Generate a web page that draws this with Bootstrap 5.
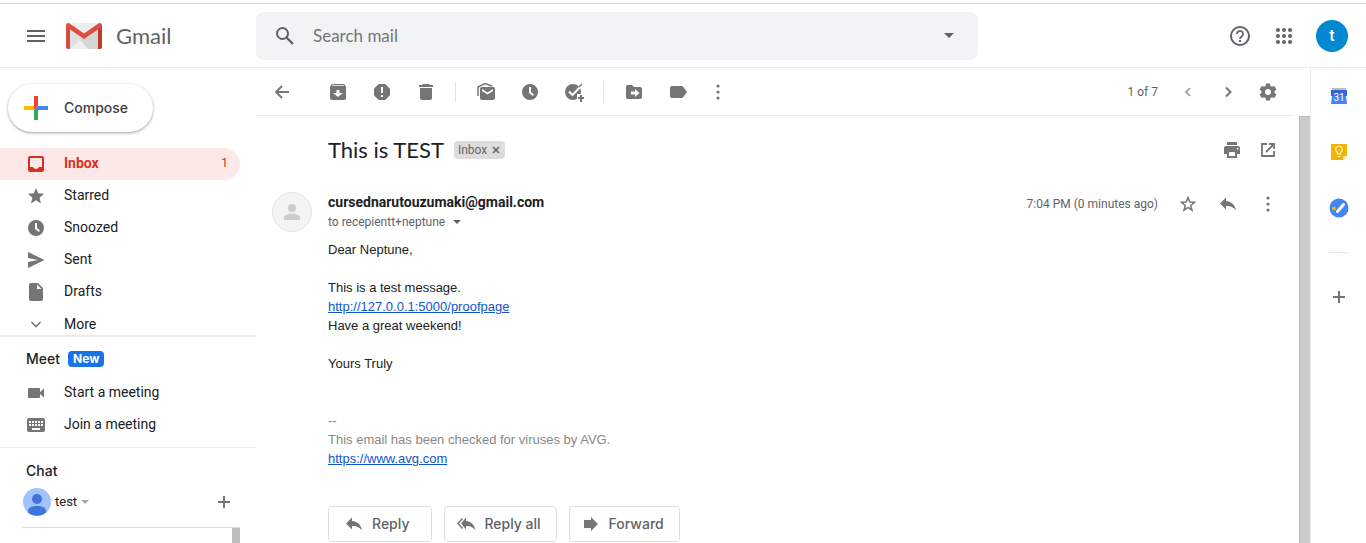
<!DOCTYPE html>
<html lang="en">
<head>
<meta charset="utf-8">
<meta name="viewport" content="width=device-width, initial-scale=1">
<title>This is TEST - Gmail</title>
<link href="https://cdn.jsdelivr.net/npm/bootstrap@5.3.0/dist/css/bootstrap.min.css" rel="stylesheet">
<style>
:root { --ink: #202124; --muted: #5f6368; --icon: #757575; --line: #ececec; --brand-font: Inter, "Open Sans", sans-serif; }
body { font: 14px/20px Roboto, Arial, sans-serif; color: var(--ink); background: #fff; }
svg { display: block; fill: currentColor; flex: none; }
button { border: 0; background: none; padding: 0; color: inherit; }
a { color: inherit; text-decoration: none; }
.ico { width: 20px; height: 20px; }
.icon-btn { display: flex; align-items: center; justify-content: center; flex: none; width: 40px; height: 40px; color: var(--icon); border-radius: 50%; }
.icon-btn.wide { width: 44px; }
.icon-btn.slim { width: 36px; }
.icon-btn.short { height: 24px; }
.icon-btn.print { width: 32px; }

.topbar { border-top: 1px solid #dadce0; border-bottom: 1px solid var(--line); padding: 8px 18px 7px 0; margin-top: 3px; color: var(--muted); }
.logo-area { width: 256px; padding-left: 16px; gap: 10px; }
.logo-text { font: 22px/28px Lato, sans-serif; color: var(--muted); margin-left: 14px; }
.search { background: #f1f3f4; border-radius: 8px; height: 48px; max-width: 722px; padding: 0 9px; }
.search input { border: 0; outline: 0; background: none; font: 17px/24px Lato, sans-serif; color: var(--ink); padding: 0; min-width: 0; }
.search input::placeholder { color: #757575; opacity: 1; }
.account { width: 32px; height: 32px; border-radius: 50%; background: #0288d1; color: #fff; font-size: 16px; font-weight: 500; margin-left: 10px; }

.side { width: 256px; }
.compose { margin: 16px 8px; height: 48px; padding: 0 25px 0 12px; border-radius: 24px; font: 500 14px/20px var(--brand-font); color: #3c4043; box-shadow: 0 1px 2px rgba(60,64,67,.3), 0 1px 3px 1px rgba(60,64,67,.15); }
.folders { height: 187px; overflow: hidden; }
.side-row { display: flex; align-items: center; height: 32px; width: 240px; padding: 0 12px 2px 26px; border-radius: 0 16px 16px 0; }
.side-row svg { color: var(--icon); margin: 2px 18px 0 0; }
.side-row.more { padding-bottom: 0; }
.side-row.current { background: #fce8e6; color: #d93025; font-weight: 700; }
.side-row.current svg { color: #d93025; }
.side-block { border-top: 1px solid var(--line); }
.meet-block { border-top: 2px solid #e8eaed; padding-bottom: 6px; }
.chat-block { padding-top: 13px; }
.side-title { font: 500 14px/20px var(--brand-font); padding-left: 26px; margin: 0; }
.new-tag { background: #1a73e8; color: #fff; font: 700 12px/16px var(--brand-font); border-radius: 4px; padding: 0 5px; }
.chat-user { padding: 7px 12px 11px 23px; font-size: 13px; }
.chat-list { margin-left: 23px; width: 217px; border-top: 1px solid #dadce0; min-height: 40px; }
.chat-list span { width: 8px; background: #bdbdbd; }

.toolbar { height: 48px; padding: 4px 6px 0 4px; margin-right: 16px; border-bottom: 1px solid var(--line); }
.rule { width: 1px; height: 20px; margin: 10px 8px 0 7px; background: #e4e4e4; }
.count { font-size: 12px; color: var(--muted); }
.toolbar .count, .stamp { margin-right: 10px; }
.toolbar .count { line-height: 40px; }
.mail { padding: 18px 11px 0 16px; }
.subject { font: 22px/28px Lato, Roboto, sans-serif; margin: 0; }
.label-chip { background: #ddd; color: #666; font-size: 12px; line-height: 18px; border-radius: 4px; padding: 0 4px; margin: 0 10px; }
.mail-head { margin-top: 26px; }
.sender { font-size: 14px; font-weight: 700; line-height: 20px; }
.to { font-size: 12px; line-height: 20px; color: var(--muted); }
.person { width: 40px; height: 40px; border-radius: 50%; background: #f4f4f4; border: 1px solid #e3e3e3; color: #ccc; }
.letter { font: 13px/19px "Liberation Sans", Arial, sans-serif; color: #222; margin: 0 0 38px; padding: 8px 0 0 56px; }
.letter p { margin: 0 0 19px; }
.letter a { color: #15c; text-decoration: underline; }
.footer-note { color: #888; margin-top: 38px; }
.answer { height: 36px; border: 1px solid #dadce0; border-radius: 4px; color: var(--muted); font: 500 14px/20px var(--brand-font); padding: 0 15px 0 11px; gap: 8px; }
.answer.first { padding: 0 22px 0 15px; }
.answer svg { color: var(--icon); }
.track { width: 11px; background: #ccc; border-left: 1px solid #b8b8b8; border-top: 1px solid #b8b8b8; }
.addons { width: 56px; border-left: 1px solid var(--line); }
.addons hr { width: 20px; margin: 16px 0; border-top: 1px solid #999; }
.addons .icon-btn { width: 56px; height: 56px; }
</style>
</head>
<body class="vh-100 overflow-hidden d-flex flex-column">
<svg width="0" height="0" class="position-absolute" aria-hidden="true">
  <symbol id="clock" viewBox="0 0 20 20"><path fill-rule="evenodd" d="M10 2a8 8 0 1 0 0 16 8 8 0 0 0 0-16zM9 5h2v5l3 2.400-1 1.600-4-3z"/></symbol>
  <symbol id="dots" viewBox="0 0 20 20"><circle cx="10" cy="4" r="1.600"/><circle cx="10" cy="10" r="1.600"/><circle cx="10" cy="16" r="1.600"/></symbol>
  <symbol id="reply" viewBox="0 0 20 20"><path d="M8 7V3.500L2 9.500l6 6V12c4.500-.300 7.500 1.200 10 4.500-.800-5-4-9-10-9.500z"/></symbol>
  <symbol id="plus" viewBox="0 0 20 20"><path d="M9 4h2v5h5v2h-5v5H9v-5H4V9h5z"/></symbol>
  <symbol id="caret" viewBox="0 0 10 6"><path d="M0 0h10L5 5z"/></symbol>
  <symbol id="person" viewBox="0 0 20 20"><circle cx="10" cy="6" r="4"/><path d="M2 18v-2.500c0-2.500 5-4 8-4s8 1.500 8 4V18z"/></symbol>
</svg>

<header class="topbar d-flex align-items-center flex-shrink-0">
  <div class="logo-area d-flex align-items-center flex-shrink-0">
    <button class="icon-btn text-reset" aria-label="Main menu"><svg class="ico" viewBox="0 0 20 20"><path d="M1 4h18v2H1zM1 9h18v2H1zM1 14h18v2H1z"/></svg></button>
    <a href="#" class="d-flex align-items-center" aria-label="Gmail">
      <svg width="36" height="26" viewBox="0 0 36 26"><path fill="#e0e0e0" d="M3 0h30v26H3z"/><path fill="#eee" d="M4 0h28L18 11z"/><path fill="#d0d0d0" d="M32 5v21H20l-6-9 4-2z" opacity=".7"/><path fill="#f0f0f0" d="m4 26 10-9 8 9z"/><path fill="#d54b3d" d="M0 2v22a2 2 0 0 0 2 2h2V4z"/><path fill="#c13a2c" d="M36 2v22a2 2 0 0 1-2 2h-2V4z"/><path fill="#de4e40" d="M3.500.400 18 10.500 32.500.400c1.700-1 3.500.200 3.500 2 0 1-.500 1.600-1.200 2.200L18 16 1.200 4.600C.5 4 0 3.400 0 2.400c0-1.800 1.800-3 3.500-2z"/></svg>
      <span class="logo-text">Gmail</span>
    </a>
  </div>
  <form class="search d-flex align-items-center flex-grow-1" role="search">
    <button type="button" class="icon-btn text-reset" aria-label="Search"><svg width="20" height="20" viewBox="0 0 20 20"><circle cx="7.500" cy="7.500" r="5.500" fill="none" stroke="currentColor" stroke-width="2"/><path d="m11.500 11.500 6.500 6.500" stroke="currentColor" stroke-width="2.400"/></svg></button>
    <input class="flex-grow-1 ms-2" type="text" placeholder="Search mail" aria-label="Search mail">
    <button type="button" class="icon-btn text-reset" aria-label="Search options"><svg width="10" height="6"><use href="#caret"/></svg></button>
  </form>
  <div class="d-flex align-items-center ms-auto">
    <button class="icon-btn wide text-reset" aria-label="Support"><svg width="22" height="22" viewBox="0 0 22 22"><circle cx="11" cy="11" r="9" fill="none" stroke="currentColor" stroke-width="2"/><path d="M8 9a3 3 0 1 1 4.600 2.500C11.500 12.200 11 12.700 11 14" fill="none" stroke="currentColor" stroke-width="1.800"/><path d="M10 15h2v2h-2z"/></svg></button>
    <button class="icon-btn wide text-reset" aria-label="Google apps"><svg class="ico" viewBox="0 0 20 20"><g id="trio"><circle cx="4" cy="4" r="2"/><circle cx="10" cy="4" r="2"/><circle cx="16" cy="4" r="2"/></g><use href="#trio" y="6"/><use href="#trio" y="12"/></svg></button>
    <button class="account" aria-label="Account">t</button>
  </div>
</header>

<div class="d-flex flex-grow-1 overflow-hidden">
  <aside class="side flex-shrink-0 overflow-hidden">
    <button class="compose d-flex align-items-center"><svg width="32" height="32" viewBox="0 0 32 32"><path fill="#ea4335" d="M14 4h4v10l-2 2-2 2z"/><path fill="#fbbc04" d="M4 14h10v4H4z"/><path fill="#34a853" d="M14 18h4v10h-4z"/><path fill="#4285f4" d="M18 14h10v4H14z"/></svg><span class="ms-2 ps-1">Compose</span></button>
    <nav class="folders">
      <a href="#" class="side-row current"><svg class="ico" viewBox="0 0 20 20"><path fill-rule="evenodd" d="M4 2h12a2 2 0 0 1 2 2v12a2 2 0 0 1-2 2H4a2 2 0 0 1-2-2V4a2 2 0 0 1 2-2zm0 2v9h3c.500 1.300 1.600 2 3 2s2.500-.700 3-2h3V4z"/></svg>Inbox<span class="ms-auto fw-normal count text-reset">1</span></a>
      <a href="#" class="side-row"><svg class="ico" viewBox="0 0 20 20"><path d="m10 14.200-5 3.300 1.400-5.800L2 7.800l5.800-.5L10 2l2.200 5.300 5.800.5-4.400 3.900 1.300 5.800z"/></svg>Starred</a>
      <a href="#" class="side-row"><svg class="ico"><use href="#clock"/></svg>Snoozed</a>
      <a href="#" class="side-row"><svg class="ico" viewBox="0 0 20 20"><path d="M2 2v6l10 2-10 2v6l16.500-8z"/></svg>Sent</a>
      <a href="#" class="side-row"><svg class="ico" viewBox="0 0 20 20"><path fill-rule="evenodd" d="M5 1h7l5 5v11a2 2 0 0 1-2 2H5a2 2 0 0 1-2-2V3a2 2 0 0 1 2-2zm6 1.500V7h4.500z"/></svg>Drafts</a>
      <a href="#" class="side-row more"><svg class="ico" viewBox="0 0 20 20"><path d="m5.500 7 4.500 4.500L14.500 7" fill="none" stroke="currentColor" stroke-width="1.600"/></svg>More</a>
    </nav>
    <section class="side-block meet-block">
      <div class="d-flex align-items-center gap-2 pt-2 mt-1 pb-2"><h2 class="side-title">Meet</h2><span class="new-tag">New</span></div>
      <a href="#" class="side-row"><svg class="ico" viewBox="0 0 20 20"><path d="M3 5h10a1 1 0 0 1 1 1v3l4-3.500v9L14 11v3a1 1 0 0 1-1 1H3a1 1 0 0 1-1-1V6a1 1 0 0 1 1-1z"/></svg>Start a meeting</a>
      <a href="#" class="side-row"><svg class="ico" viewBox="0 0 20 20"><rect x="1" y="3" width="18" height="14" rx="2"/><path d="M3 7h14M3 10h14" stroke="#fff" stroke-width="2" stroke-dasharray="2 1"/><path d="M6 14h8" stroke="#fff" stroke-width="2"/></svg>Join a meeting</a>
    </section>
    <section class="side-block chat-block">
      <h2 class="side-title">Chat</h2>
      <div class="chat-user d-flex align-items-center">
        <svg width="28" height="28" viewBox="0 0 28 28"><circle cx="14" cy="14" r="14" fill="#a1c2fa"/><g fill="#3f74e0"><circle cx="14" cy="11" r="5"/><path d="M5 24.500v-1.500c0-3.300 4-5 9-5s9 1.700 9 5v1.500a14 14 0 0 1-18 0z"/></g></svg>
        <span class="mx-1">test</span><svg width="8" height="5" color="#aaa"><use href="#caret"/></svg>
        <button class="icon-btn short ms-auto" aria-label="Start a chat"><svg class="ico"><use href="#plus"/></svg></button>
      </div>
      <div class="chat-list d-flex justify-content-end"><span></span></div>
    </section>
  </aside>

  <main class="flex-grow-1 d-flex flex-column overflow-hidden">
    <div class="toolbar d-flex align-items-start flex-shrink-0">
      <button class="icon-btn wide me-2" aria-label="Back"><svg class="ico" viewBox="0 0 20 20"><path d="M17 10H4.500M10 4l-6 6 6 6" fill="none" stroke="currentColor" stroke-width="1.900"/></svg></button>
      <button class="icon-btn wide ms-1" aria-label="Archive"><svg class="ico" viewBox="0 0 20 20"><path fill-rule="evenodd" d="M4 2h12l2 2.500V16a2 2 0 0 1-2 2H4a2 2 0 0 1-2-2V4.500zm0 1.200V4h12v-.800zM8.500 8v3H5l5 4 5-4h-3.500V8z"/></svg></button>
      <button class="icon-btn wide" aria-label="Report spam"><svg class="ico" viewBox="0 0 20 20"><path fill-rule="evenodd" d="M6.700 2h6.600L18 6.700v6.600L13.300 18H6.700L2 13.300V6.700zM9 5v6h2V5zm0 8v2h2v-2z"/></svg></button>
      <button class="icon-btn wide" aria-label="Delete"><svg class="ico" viewBox="0 0 20 20"><path d="M7 2h6l1 1h3v2H3V3h3zM4 6h12v10a2 2 0 0 1-2 2H6a2 2 0 0 1-2-2z"/></svg></button>
      <span class="rule"></span>
      <button class="icon-btn wide" aria-label="Mark as unread"><svg class="ico" viewBox="0 0 20 20"><path fill-rule="evenodd" d="M6 5h11a2 2 0 0 1 2 2v9a2 2 0 0 1-2 2H6a2 2 0 0 1-2-2V7a2 2 0 0 1 2-2zm0 2v2l5.500 3.500L17 9V7l-5.500 3.500z"/><path d="M2 14V5l7-3.500L16 4" fill="none" stroke="currentColor" stroke-width="1.500"/></svg></button>
      <button class="icon-btn wide" aria-label="Snooze"><svg class="ico"><use href="#clock"/></svg></button>
      <button class="icon-btn wide" aria-label="Add to tasks"><svg class="ico" viewBox="0 0 20 20"><circle cx="9" cy="10" r="8"/><path d="m5 9.500 3.500 3.500L18 3" fill="none" stroke="#fff" stroke-width="2"/><path d="m15 5 3-3" stroke="currentColor" stroke-width="1.500"/><path d="M13 12h7v8h-7z" fill="#fff"/><path d="M16 13h2v2h2v2h-2v3h-2v-3h-2v-2h2z"/></svg></button>
      <span class="rule"></span>
      <button class="icon-btn wide" aria-label="Move to"><svg class="ico" viewBox="0 0 20 20"><path fill-rule="evenodd" d="M4 3h4l2 2h6a2 2 0 0 1 2 2v8a2 2 0 0 1-2 2H4a2 2 0 0 1-2-2V5a2 2 0 0 1 2-2zm7 4v2.500H7v3h4V15l4.500-4z"/></svg></button>
      <button class="icon-btn wide" aria-label="Labels"><svg class="ico" viewBox="0 0 20 20"><path d="M4 4h9.500c.8 0 1.400.400 1.800 1L19 10l-3.700 5c-.4.600-1 1-1.800 1H4a2 2 0 0 1-2-2V6a2 2 0 0 1 2-2z"/></svg></button>
      <button class="icon-btn slim" aria-label="More"><svg class="ico"><use href="#dots"/></svg></button>
      <span class="count ms-auto">1 of 7</span>
      <button class="icon-btn opacity-75" aria-label="Newer"><svg class="ico" viewBox="0 0 20 20"><path d="m12 6-4 4 4 4" fill="none" stroke="currentColor" stroke-width="1.600"/></svg></button>
      <button class="icon-btn" aria-label="Older"><svg class="ico" viewBox="0 0 20 20"><path d="m8 5.500 4.500 4.500L8 14.500" fill="none" stroke="currentColor" stroke-width="2"/></svg></button>
      <button class="icon-btn" aria-label="Settings"><svg class="ico" viewBox="0 0 20 20"><path fill-rule="evenodd" d="M8 1.500h4l.5 2.400 1.600.9 2.300-.8 2 3.500-1.800 1.600v1.800l1.800 1.600-2 3.500-2.300-.8-1.600.9-.5 2.400H8l-.5-2.400-1.600-.9-2.300.8-2-3.500 1.800-1.600V9.100L1.600 7.500l2-3.500 2.300.8 1.600-.9zM10 7a3 3 0 1 0 0 6 3 3 0 0 0 0-6z"/></svg></button>
    </div>
    <div class="d-flex flex-grow-1 overflow-hidden">
      <article class="mail flex-grow-1">
        <div class="d-flex align-items-center ps-5">
          <h1 class="subject ms-2">This is TEST</h1>
          <span class="label-chip d-flex align-items-center">Inbox<button class="ms-1 d-flex" aria-label="Remove label"><svg width="10" height="10" viewBox="0 0 10 10"><path d="m2 2 6 6M8 2 2 8" stroke="currentColor" stroke-width="1.600"/></svg></button></span>
          <button class="icon-btn short print ms-auto my-1" aria-label="Print"><svg class="ico" viewBox="0 0 20 20"><path fill-rule="evenodd" d="M5 2h10v3H5zM4 6h12a2 2 0 0 1 2 2v6h-3v4H5v-4H2V8a2 2 0 0 1 2-2zm3 6v4h6v-4zm8-4v1.500h1.500V8z"/></svg></button>
          <button class="icon-btn short" aria-label="Open in new window"><svg class="ico" viewBox="0 0 20 20"><path d="M9 4H4v12h12v-5M11 4h5v5M16 4l-8 8" fill="none" stroke="currentColor" stroke-width="1.800"/></svg></button>
        </div>
        <div class="mail-head d-flex align-items-start">
          <span class="person d-flex align-items-center justify-content-center flex-shrink-0"><svg class="ico"><use href="#person"/></svg></span>
          <div class="ms-3">
            <div class="sender">cursednarutouzumaki@gmail.com</div>
            <div class="to d-flex align-items-center">to recepientt+neptune<button class="ms-2 d-flex" aria-label="Show details"><svg width="8" height="5"><use href="#caret"/></svg></button></div>
          </div>
          <div class="d-flex align-items-center ms-auto">
            <span class="count stamp">7:04 PM (0 minutes ago)</span>
            <button class="icon-btn short" aria-label="Star"><svg class="ico" viewBox="0 0 20 20"><path d="m10 13.500-4 2.700 1.300-4.800L3.500 8.300l4.700-.3L10 3.500 11.800 8l4.700.3-3.800 3.100 1.300 4.800z" fill="none" stroke="currentColor" stroke-width="1.500"/></svg></button>
            <button class="icon-btn short" aria-label="Reply"><svg class="ico"><use href="#reply"/></svg></button>
            <button class="icon-btn short" aria-label="More"><svg class="ico"><use href="#dots"/></svg></button>
          </div>
        </div>
        <div class="letter">
          <p>Dear Neptune,</p>
          <p>This is a test message.<br><a href="#">http://127.0.0.1:5000/proofpage</a><br>Have a great weekend!</p>
          <p>Yours Truly</p>
          <div class="footer-note">--<br>This email has been checked for viruses by AVG.<br><a href="#">https://www.avg.com</a></div>
        </div>
        <div class="d-flex ps-5 pb-4">
          <button class="answer first d-flex align-items-center ms-2 me-2"><svg class="ico"><use href="#reply"/></svg>Reply</button>
          <button class="answer d-flex align-items-center mx-1"><svg class="ico" viewBox="0 0 20 20"><path d="M10 7V3.500l-5 6 5 6V12c4.500-.300 7 1.200 9.500 4.500C18.500 11.500 16 7.500 10 7z"/><path d="M6.500 4.500 2 9.500l4.500 5" fill="none" stroke="currentColor" stroke-width="1.500"/></svg>Reply all</button>
          <button class="answer d-flex align-items-center ms-2"><svg class="ico" viewBox="0 0 20 20"><path d="M3 6h7V3l7 7-7 7v-3H3z"/></svg>Forward</button>
        </div>
      </article>
      <div class="track flex-shrink-0"></div>
    </div>
  </main>

  <aside class="addons flex-shrink-0 d-flex flex-column align-items-center">
    <button class="icon-btn" aria-label="Calendar"><svg class="ico" viewBox="0 0 20 20"><path fill="#bdbdbd" d="M3 2h14v3H3z"/><path fill="#3367d6" d="M2 4h16v6H2z"/><path fill="#4285f4" d="M3 10h14l1 8H2z"/><text x="10" y="15" font-size="10" fill="#fff" text-anchor="middle">31</text></svg></button>
    <button class="icon-btn" aria-label="Keep"><svg class="ico" viewBox="0 0 20 20"><path fill="#f4b400" d="M3 2h14a1 1 0 0 1 1 1v11l-4 4H3a1 1 0 0 1-1-1V3a1 1 0 0 1 1-1z"/><path fill="#fce8b2" d="m18 14-4 4v-3a1 1 0 0 1 1-1z"/><path d="M8.500 12v-1.500a3.300 3.300 0 1 1 3 0V12zM8.500 14.500h3" fill="none" stroke="#fff3cf" stroke-width="1.200"/></svg></button>
    <button class="icon-btn" aria-label="Tasks"><svg class="ico" viewBox="0 0 20 20"><circle cx="10" cy="10" r="9.500" fill="#4285f4"/><circle cx="5" cy="10.500" r="2" fill="#f4b400"/><path d="m8.500 13.500 6-7" stroke="#fff" stroke-width="3" stroke-linecap="round"/></svg></button>
    <hr>
    <button class="icon-btn" aria-label="Get add-ons"><svg class="ico"><use href="#plus"/></svg></button>
  </aside>
</div>
<script src="https://cdn.jsdelivr.net/npm/bootstrap@5.3.0/dist/js/bootstrap.bundle.min.js"></script>
</body>
</html>
